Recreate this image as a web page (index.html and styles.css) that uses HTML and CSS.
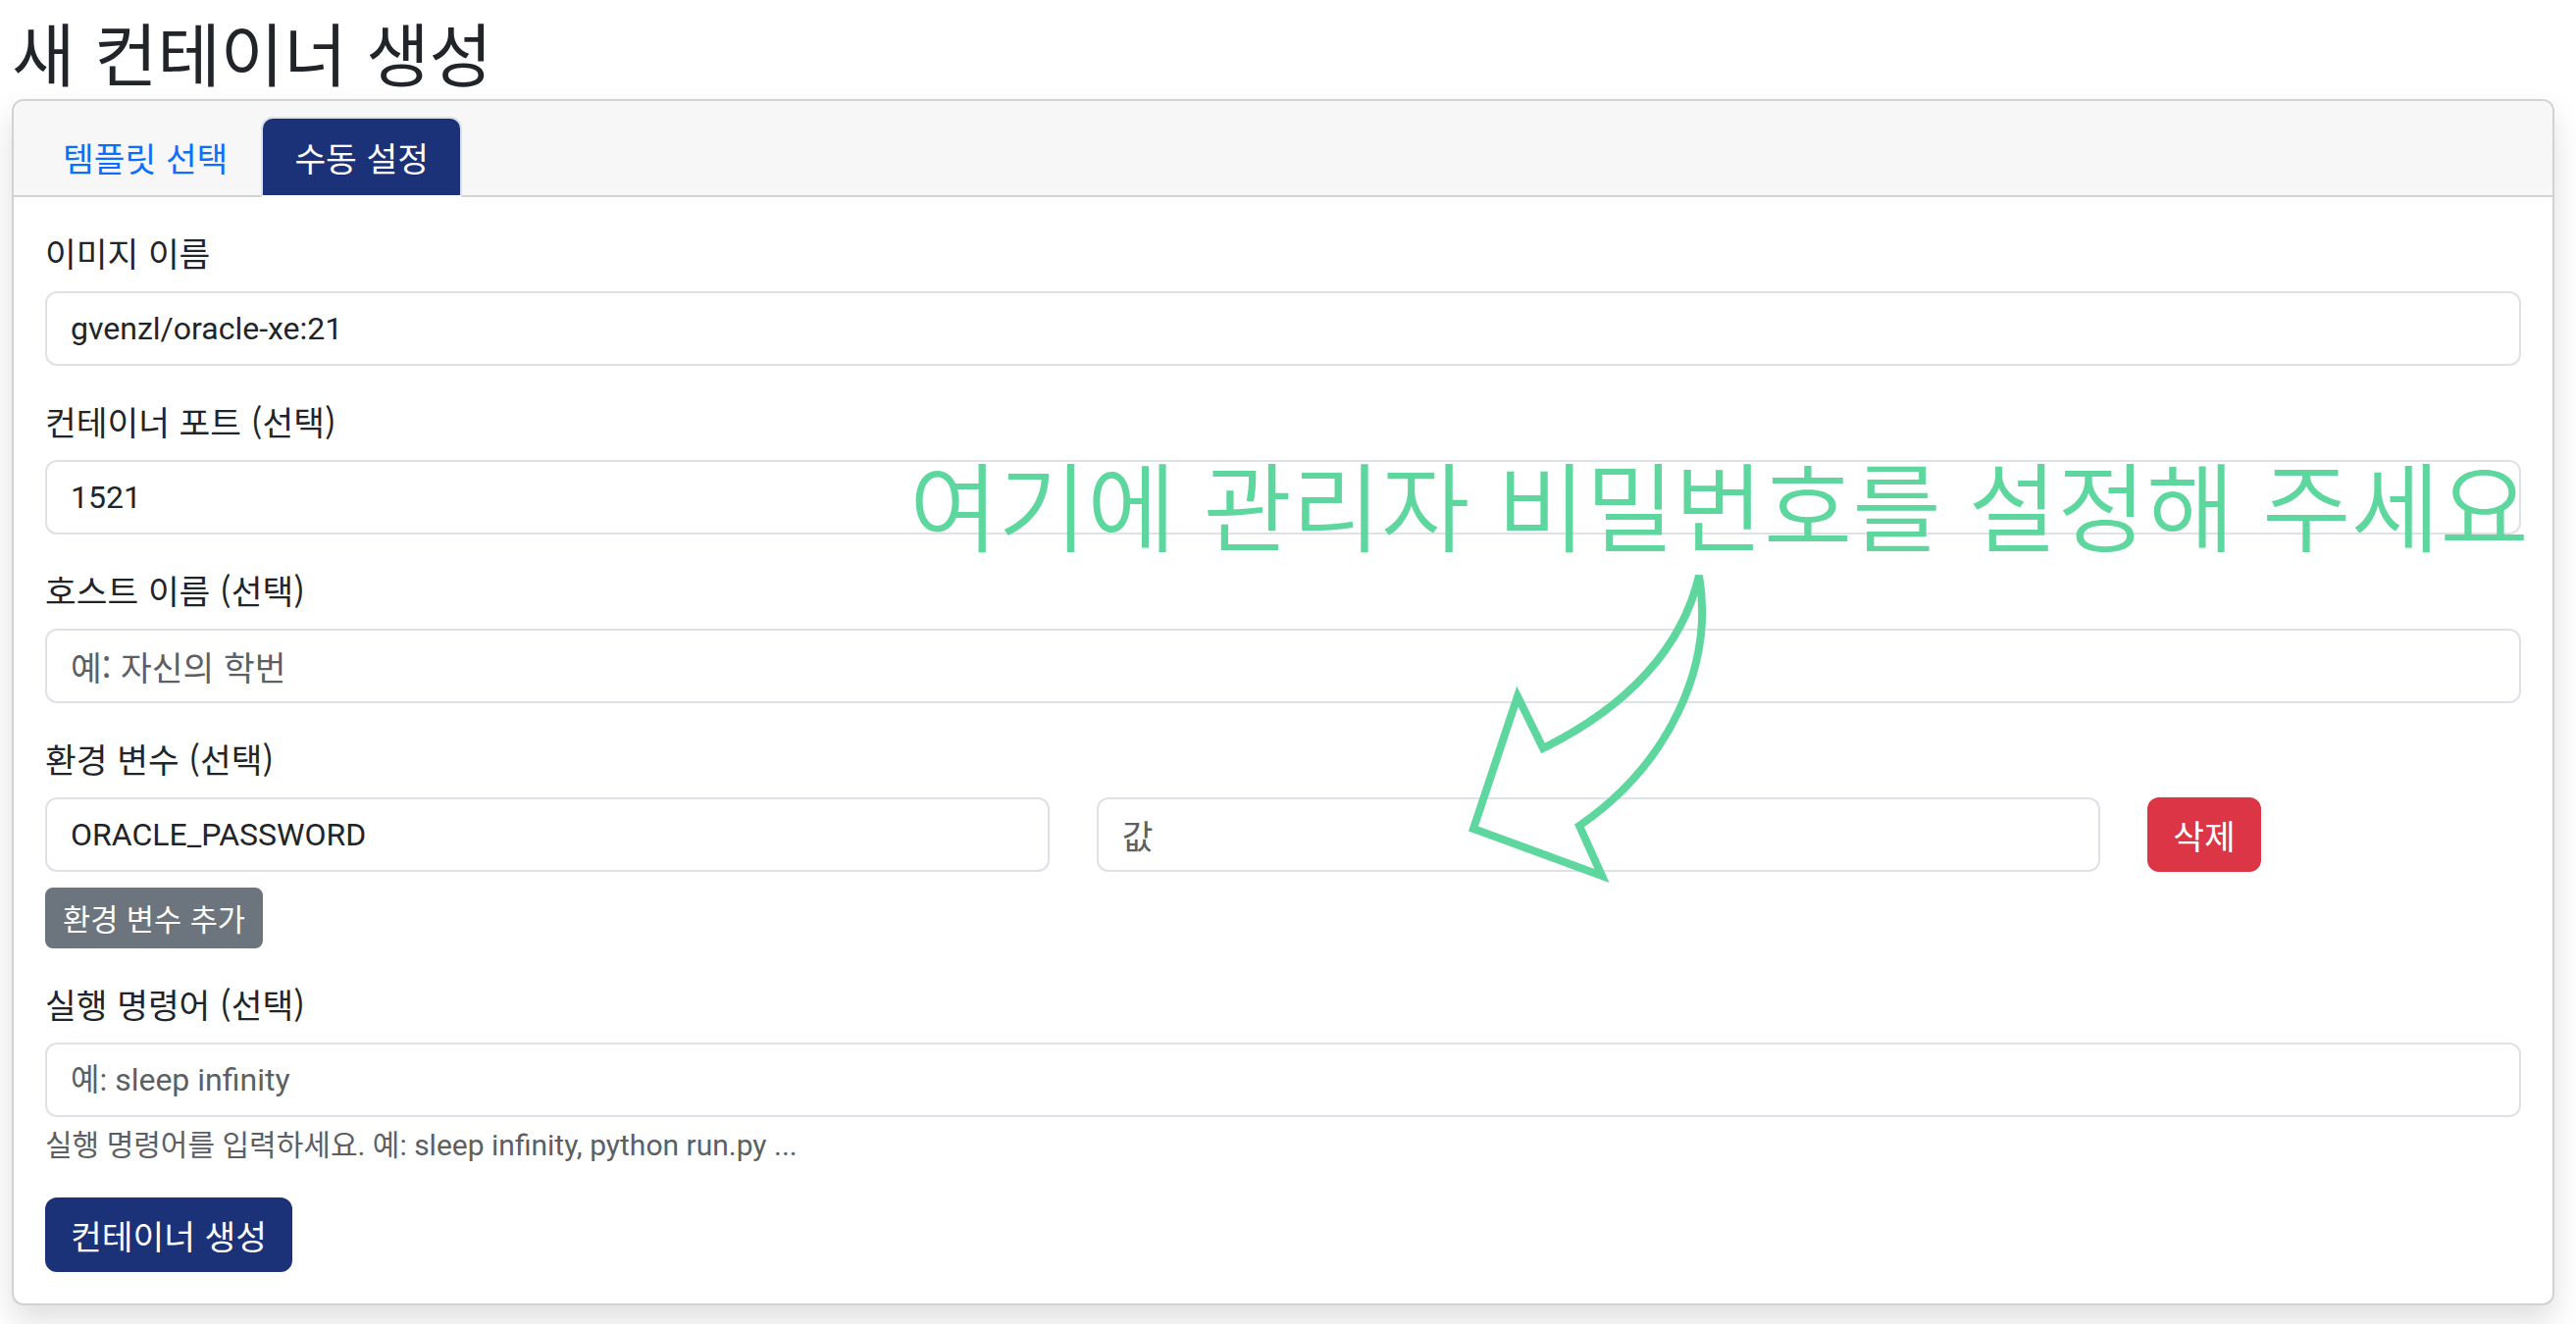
FILE: index.html
```html
<!DOCTYPE html>
<html lang="ko">
<head>
<meta charset="utf-8">
<title>새 컨테이너 생성</title>
<link rel="stylesheet" href="styles.css">
</head>
<body>
<div class="page">
  <h1 class="title">새 컨테이너 생성</h1>
  <div class="card">
    <div class="card-header">
      <ul class="tabs">
        <li><a class="tab" href="#">템플릿 선택</a></li>
        <li><a class="tab active" href="#">수동 설정</a></li>
      </ul>
    </div>
    <div class="card-body">
      <div class="group">
        <label class="label">이미지 이름</label>
        <input class="field" type="text" value="gvenzl/oracle-xe:21">
      </div>
      <div class="group">
        <label class="label">컨테이너 포트 (선택)</label>
        <input class="field" type="text" value="1521">
      </div>
      <div class="group">
        <label class="label">호스트 이름 (선택)</label>
        <input class="field field-ko" type="text" placeholder="예: 자신의 학번">
      </div>
      <div class="group">
        <label class="label">환경 변수 (선택)</label>
        <div class="env-row">
          <div class="col5"><input class="field" type="text" value="ORACLE_PASSWORD"></div>
          <div class="col5"><input class="field field-ko" type="text" placeholder="값"></div>
          <div class="col2"><button class="btn btn-danger" type="button">삭제</button></div>
        </div>
        <button class="btn btn-sm btn-secondary" type="button">환경 변수 추가</button>
      </div>
      <div class="group">
        <label class="label">실행 명령어 (선택)</label>
        <input class="field" type="text" placeholder="예: sleep infinity">
        <div class="help">실행 명령어를 입력하세요. 예: sleep infinity, python run.py ...</div>
      </div>
      <button class="btn btn-primary" type="button">컨테이너 생성</button>
    </div>
  </div>
</div>
<div class="annotation">여기에 관리자 비밀번호를 설정해 주세요</div>
<svg class="arrow" width="2626" height="1350" viewBox="0 0 2626 1350" xmlns="http://www.w3.org/2000/svg">
  <path d="M1732,587 C1715,660 1660,720 1573,763 L1547,710 L1502,845 L1633,893 L1610,842 C1700,780 1748,680 1732,587 Z" fill="none" stroke="#5dd79e" stroke-width="8" stroke-linejoin="miter"/>
</svg>
</body>
</html>
```

FILE: styles.css
```css
* {
  box-sizing: border-box;
}

html, body {
  margin: 0;
  padding: 0;
  background: #ffffff;
}

body {
  font-family: "Noto Sans CJK KR", sans-serif;
  font-size: 34.5px;
  line-height: 48px;
  color: #212529;
  position: relative;
  width: 2626px;
  height: 1350px;
  overflow: hidden;
}

.page {
  padding: 11px 22px 0 12px;
}

.title {
  margin: 0 0 6px;
  font-size: 70px;
  line-height: 1.2;
  font-weight: 400;
  color: #212529;
}

.card {
  border: 2px solid #d2d2d2;
  border-radius: 12px;
  background: #fff;
  box-shadow: 0 16px 32px rgba(0, 0, 0, 0.13);
}

.card-header {
  background: #f7f7f7;
  padding: 16px 32px 0;
  border-bottom: 2px solid #d2d2d2;
  border-radius: 10px 10px 0 0;
}

.tabs {
  display: flex;
  list-style: none;
  margin: 0 -16px -2px;
  padding: 0;
}

.tab {
  display: block;
  padding: 15px 32px;
  border: 2px solid transparent;
  border-radius: 12px 12px 0 0;
  line-height: 48px;
  color: #0d6efd;
  text-decoration: none;
}

.tab.active {
  background: #1b3278;
  color: #ffffff;
  border-color: #dee2e6 #dee2e6 #ffffff;
}

.card-body {
  padding: 32px;
}

.group {
  margin-bottom: 32px;
}

.label {
  display: block;
  margin-bottom: 16px;
  line-height: 48px;
}

.field {
  display: block;
  width: 100%;
  height: 76px;
  padding: 12px 24px;
  font-family: Roboto, "Noto Sans CJK KR", sans-serif;
  font-size: 32px;
  line-height: 48px;
  color: #212529;
  background: #fff;
  border: 2px solid #dee2e6;
  border-radius: 12px;
  outline: none;
}

.field-ko {
  font-family: "Noto Sans CJK KR", sans-serif;
  font-size: 34.5px;
}

.field::placeholder {
  color: #5c5f63;
  opacity: 1;
}

.env-row {
  display: flex;
  margin: 0 -24px 16px;
}

.col5 {
  flex: 0 0 41.666667%;
  padding: 0 24px;
}

.col2 {
  flex: 0 0 16.666667%;
  padding: 0 24px;
}

.btn {
  display: inline-block;
  font-family: "Noto Sans CJK KR", sans-serif;
  font-size: 34.5px;
  line-height: 48px;
  padding: 12px 24px;
  border: 2px solid transparent;
  border-radius: 12px;
  color: #fff;
  cursor: pointer;
}

.btn-sm {
  font-size: 30.6px;
  line-height: 42px;
  padding: 8px 16px;
  border-radius: 8px;
}

.btn-danger {
  background: #dc3545;
  border-color: #dc3545;
}

.btn-secondary {
  background: #6c757d;
  border-color: #6c757d;
}

.btn-primary {
  background: #1b3278;
  border-color: #1b3278;
}

.help {
  margin-top: 8px;
  font-family: Roboto, "Noto Sans CJK KR", sans-serif;
  font-size: 30px;
  line-height: 42px;
  color: #5c5f63;
}

.annotation {
  position: absolute;
  left: 927px;
  top: 463px;
  font-family: "Noto Sans CJK KR", sans-serif;
  font-size: 98.5px;
  font-weight: 350;
  line-height: 1;
  color: #5dd79e;
  white-space: nowrap;
  pointer-events: none;
}

.arrow {
  position: absolute;
  left: 0;
  top: 0;
  pointer-events: none;
}
```
